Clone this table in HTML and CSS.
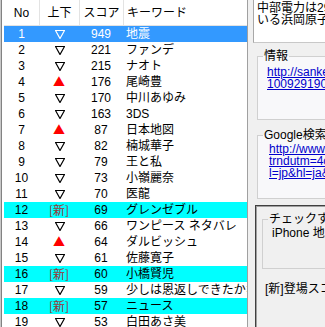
FILE: index.html
```html
<!DOCTYPE html>
<html lang="ja">
  <head>
    <meta charset="UTF-8" />
    <title>キーワードランキング</title>
    <link rel="stylesheet" href="styles.css">
  </head>
  <body>
    <div class="window">
      <!-- Ranking list -->
      <div class="rank-list">
        <div class="rank-head">
          <div class="cell">No</div>
          <div class="cell">上下</div>
          <div class="cell">スコア</div>
          <div class="cell word">キーワード</div>
        </div>
        <div class="rank-row selected"><span>1</span><span class="down"><svg viewBox="0 0 10 9"><path d="M0.5 0.5H9.5L5 8.5Z"/></svg></span><span>949</span><span class="word">地震</span></div>
        <div class="rank-row"><span>2</span><span class="down"><svg viewBox="0 0 10 9"><path d="M0.5 0.5H9.5L5 8.5Z"/></svg></span><span>221</span><span class="word">ファンデ</span></div>
        <div class="rank-row"><span>3</span><span class="down"><svg viewBox="0 0 10 9"><path d="M0.5 0.5H9.5L5 8.5Z"/></svg></span><span>215</span><span class="word">ナオト</span></div>
        <div class="rank-row"><span>4</span><span class="up">▲</span><span>176</span><span class="word">尾崎豊</span></div>
        <div class="rank-row"><span>5</span><span class="down"><svg viewBox="0 0 10 9"><path d="M0.5 0.5H9.5L5 8.5Z"/></svg></span><span>170</span><span class="word">中川あゆみ</span></div>
        <div class="rank-row"><span>6</span><span class="down"><svg viewBox="0 0 10 9"><path d="M0.5 0.5H9.5L5 8.5Z"/></svg></span><span>163</span><span class="word">3DS</span></div>
        <div class="rank-row"><span>7</span><span class="up">▲</span><span>87</span><span class="word">日本地図</span></div>
        <div class="rank-row"><span>8</span><span class="down"><svg viewBox="0 0 10 9"><path d="M0.5 0.5H9.5L5 8.5Z"/></svg></span><span>82</span><span class="word">楠城華子</span></div>
        <div class="rank-row"><span>9</span><span class="down"><svg viewBox="0 0 10 9"><path d="M0.5 0.5H9.5L5 8.5Z"/></svg></span><span>79</span><span class="word">王と私</span></div>
        <div class="rank-row"><span>10</span><span class="down"><svg viewBox="0 0 10 9"><path d="M0.5 0.5H9.5L5 8.5Z"/></svg></span><span>73</span><span class="word">小嶺麗奈</span></div>
        <div class="rank-row"><span>11</span><span class="down"><svg viewBox="0 0 10 9"><path d="M0.5 0.5H9.5L5 8.5Z"/></svg></span><span>70</span><span class="word">医龍</span></div>
        <div class="rank-row new"><span>12</span><span class="tag">[新]</span><span>69</span><span class="word">グレンゼブル</span></div>
        <div class="rank-row"><span>13</span><span class="down"><svg viewBox="0 0 10 9"><path d="M0.5 0.5H9.5L5 8.5Z"/></svg></span><span>66</span><span class="word">ワンピース ネタバレ</span></div>
        <div class="rank-row"><span>14</span><span class="up">▲</span><span>64</span><span class="word">ダルビッシュ</span></div>
        <div class="rank-row"><span>15</span><span class="down"><svg viewBox="0 0 10 9"><path d="M0.5 0.5H9.5L5 8.5Z"/></svg></span><span>61</span><span class="word">佐藤寛子</span></div>
        <div class="rank-row new"><span>16</span><span class="tag">[新]</span><span>60</span><span class="word">小橋賢児</span></div>
        <div class="rank-row"><span>17</span><span class="down"><svg viewBox="0 0 10 9"><path d="M0.5 0.5H9.5L5 8.5Z"/></svg></span><span>59</span><span class="word">少しは恩返しできたかな</span></div>
        <div class="rank-row new"><span>18</span><span class="tag">[新]</span><span>57</span><span class="word">ニュース</span></div>
        <div class="rank-row"><span>19</span><span class="down"><svg viewBox="0 0 10 9"><path d="M0.5 0.5H9.5L5 8.5Z"/></svg></span><span>53</span><span class="word">白田あさ美</span></div>
      </div>

      <!-- Detail panel -->
      <div class="side">
        <div class="memo">
          <div>中部電力は29日、運転を停止して</div>
          <div>いる浜岡原子力発電所の</div>
        </div>

        <fieldset class="group">
          <legend>情報</legend>
          <div class="links info-links">
            <a href="#">http://sankei.jp.msn.com/affairs/</a><br>
            <a href="#">100929190001-n1.htm</a>
          </div>
        </fieldset>

        <fieldset class="group google">
          <legend>Google検索</legend>
          <div class="links google-links">
            <a href="#">http://www.google.co.jp/search?</a><br>
            <a href="#">trndutm=4c&amp;q=%E5%9C%B0</a><br>
            <a href="#">l=jp&amp;hl=ja&amp;ie=UTF-8</a>
          </div>
        </fieldset>

        <div class="settings">
          <fieldset class="group check">
            <legend>チェックするキーワード</legend>
            <div class="check-list">iPhone 地震</div>
          </fieldset>
          <div class="new-score">[新]登場スコアの下限</div>
        </div>
      </div>
    </div>
  </body>
</html>
```

FILE: styles.css
```css
body {
  margin: 0;
  font-family: "Liberation Sans", "Noto Sans CJK JP", sans-serif;
  font-size: 12px;
  color: black;
  background-color: #f0f0f0;
}
.window {
  display: flex;
  width: 325px;
  height: 327px;
  overflow: hidden;
}
.rank-list {
  width: 248px;
  flex-shrink: 0;
  box-sizing: border-box;
  background-color: white;
  border-left: 1px solid #c8c8c8;
  border-right: 1px solid #a0a0a0;
  box-shadow: inset 1px 0 0 #828282;
  padding-left: 3px;
}
.rank-head,
.rank-row {
  display: grid;
  grid-template-columns: 35px 40px 44px 124px;
}
.rank-head {
  height: 26px;
  box-sizing: border-box;
  border-bottom: 1px solid #e3e3e3;
}
.rank-head .cell {
  padding-top: 5px;
  text-align: center;
  line-height: 16px;
}
.rank-head .cell + .cell {
  border-left: 1px solid #e3e3e3;
}
.rank-head .word {
  text-align: left;
  padding-left: 3px;
}
.rank-row {
  height: 16px;
  line-height: 16px;
  white-space: nowrap;
}
.rank-row span {
  text-align: center;
}
.rank-row .word {
  text-align: left;
  padding-left: 3px;
  overflow: hidden;
}
.rank-row .up {
  font-family: "Noto Sans CJK JP", sans-serif;
  color: #ff0000;
}
.rank-row .tag {
  font-family: "Noto Sans CJK JP", sans-serif;
  color: #993333;
}
.rank-row .down {
  display: flex;
  justify-content: center;
  align-items: center;
}
.rank-row .down svg {
  width: 10px;
  height: 9px;
  margin-left: 1px;
  fill: none;
  stroke: currentColor;
  stroke-width: 1.2;
}
.rank-row.selected {
  background-color: #3399ff;
  color: white;
}
.rank-row.new {
  background-color: #00ffff;
}

.side {
  flex: 1;
  overflow: hidden;
  padding-left: 5px;
}
.memo {
  width: 160px;
  height: 43px;
  box-sizing: border-box;
  background-color: white;
  border-left: 1px solid #a8a8a8;
  border-bottom: 1px solid #c8c8c8;
  padding: 2px 0 0 3px;
  line-height: 12px;
  white-space: nowrap;
}
.group {
  width: 160px;
  margin: 6px 0 0 4px;
  padding: 3px 0 0 5px;
  border: 1px solid #d0d0d0;
  background-color: #f8f8fa;
}
.group legend {
  padding: 0 1px;
  line-height: 14px;
  white-space: nowrap;
}
.links {
  padding-left: 4px;
  line-height: 12px;
  white-space: nowrap;
}
.links a {
  color: #0000cc;
}
.info-links {
  height: 53px;
}
.group.google {
  margin-top: 8px;
  padding-top: 1px;
}
.google-links {
  height: 55px;
  padding-left: 6px;
}
.settings {
  margin: 6px 0 0 2px;
  height: 140px;
  border-top: 1px solid #404040;
  border-left: 1px solid #404040;
  box-shadow: inset 1px 1px 0 #a0a0a0;
  padding-top: 6px;
}
.group.check {
  margin: 0 0 0 6px;
  padding-top: 1px;
  background-color: #f0f0f0;
}
.check-list {
  height: 41px;
  padding-left: 4px;
  line-height: 13px;
  white-space: nowrap;
}
.new-score {
  margin: 14px 0 0 9px;
  line-height: 13px;
  white-space: nowrap;
}
```
